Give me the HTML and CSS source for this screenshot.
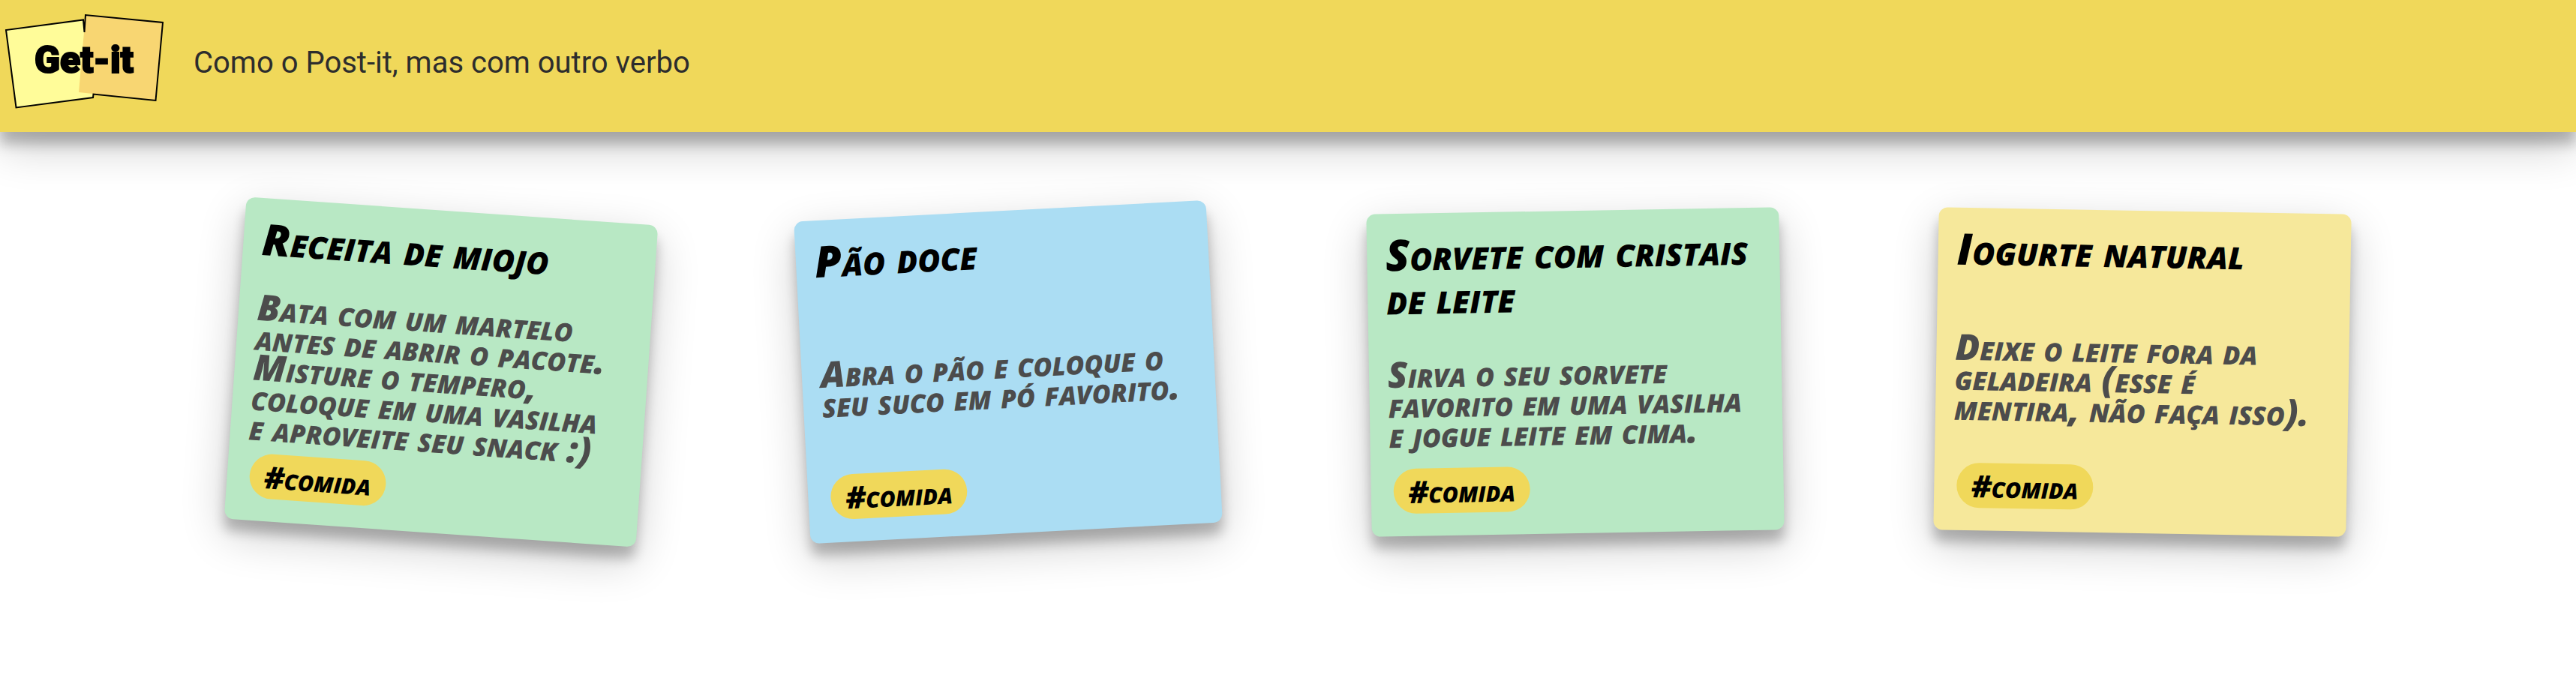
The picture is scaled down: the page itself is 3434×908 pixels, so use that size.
FILE: index.html
```html
<!DOCTYPE html>
<html lang="pt-br">
<head>
  <meta charset="utf-8">
  <meta name="viewport" content="width=device-width, initial-scale=1">
  <title>Get-it</title>
  <link rel="stylesheet" href="styles.css">
</head>
<body>
  <header class="appbar">
    <svg class="logo" viewBox="0 0 220 168" role="img" aria-label="Get-it">
      <polygon class="logo-back" points="8,40 111,26.5 124,130 21.5,143.5"/>
      <polygon class="logo-front" points="114,20 217,30 207.5,134 105,123"/>
      <path class="logo-outline" d="M112.500 43 L111 26.500 L8 40 L21.500 143.500 L124 130 L124.500 125.500 L207.500 134 L217 30 L114 20 Z"/>
      <text class="logo-text" x="46" y="97">Get-it</text>
    </svg>
    <p class="subtitle">Como o Post-it, mas com outro verbo</p>
  </header>
  <main class="cards">
    <article class="card card-green tilt-right-large">
      <h2 class="card-title">Receita de miojo</h2>
      <p class="card-content">Bata com um martelo antes de abrir o pacote. Misture o tempero, coloque em uma vasilha e aproveite seu snack :)</p>
      <span class="tag">#comida</span>
    </article>
    <article class="card card-blue tilt-left-large">
      <h2 class="card-title">Pão doce</h2>
      <p class="card-content">Abra o pão e coloque o seu suco em pó favorito.</p>
      <span class="tag">#comida</span>
    </article>
    <article class="card card-green tilt-left-small">
      <h2 class="card-title">Sorvete com cristais de leite</h2>
      <p class="card-content">Sirva o seu sorvete favorito em uma vasilha e jogue leite em cima.</p>
      <span class="tag">#comida</span>
    </article>
    <article class="card card-yellow tilt-right-small">
      <h2 class="card-title">Iogurte natural</h2>
      <p class="card-content">Deixe o leite fora da geladeira (esse é mentira, não faça isso).</p>
      <span class="tag">#comida</span>
    </article>
  </main>
</body>
</html>
```
FILE: styles.css
```css
:root {
  --accent: #f0d85a;
  --shadow: 0 16px 16px rgba(0, 0, 0, 0.24), 0 20px 60px rgba(0, 0, 0, 0.2);
  --marker: "Permanent Marker", "Open Sans", Lato, sans-serif;
}

* {
  box-sizing: border-box;
}

body {
  margin: 0;
  background: #fff;
  font-family: Roboto, sans-serif;
}

.appbar {
  display: flex;
  align-items: center;
  gap: 38px;
  padding-bottom: 8px;
  background: var(--accent);
  box-shadow: var(--shadow);
}

.logo {
  display: block;
  width: 220px;
  height: 168px;
}

.logo-back {
  fill: #fffc99;
}

.logo-front {
  fill: #f8d672;
}

.logo-outline {
  fill: none;
  stroke: #000;
  stroke-width: 2;
}

.logo-text {
  font-family: Impact, Roboto, sans-serif;
  font-size: 50px;
  font-weight: 900;
  stroke: #000;
  stroke-width: 2;
}

.subtitle {
  margin: 0;
  color: #2d2d2d;
  font-size: 40px;
  line-height: 48px;
}

.cards {
  display: grid;
  grid-template-columns: repeat(auto-fit, minmax(640px, 1fr));
  justify-items: center;
  gap: 80px 0;
  padding: 105px 200px 105px 210px;
}

.card {
  display: flex;
  flex-direction: column;
  align-items: flex-start;
  justify-content: space-between;
  width: 550px;
  min-height: 430px;
  padding: 25px 25px 30px;
  border-radius: 12px;
  box-shadow: var(--shadow);
  font-family: var(--marker);
  font-variant: small-caps;
  font-style: italic;
  font-weight: 800;
}

.card-green {
  background: #b8e8c4;
}

.card-blue {
  background: #abddf3;
}

.card-yellow {
  background: #f6e89b;
}

.tilt-right-large {
  transform: rotate(4deg);
}

.tilt-left-large {
  transform: rotate(-3deg);
}

.tilt-left-small {
  transform: rotate(-1deg);
}

.tilt-right-small {
  transform: rotate(1deg);
}

.card-title {
  margin: 0 0 26px;
  color: #000;
  font-size: 58px;
  font-weight: 800;
  line-height: 58px;
}

.card-content {
  margin: 0;
  padding-right: 16px;
  color: #4c4c4c;
  font-size: 48px;
  line-height: 40px;
}

.tag {
  margin-left: 5px;
  padding: 0 20px;
  border-radius: 30px;
  background: var(--accent);
  color: #000;
  font-size: 41px;
  line-height: 60px;
}
```
